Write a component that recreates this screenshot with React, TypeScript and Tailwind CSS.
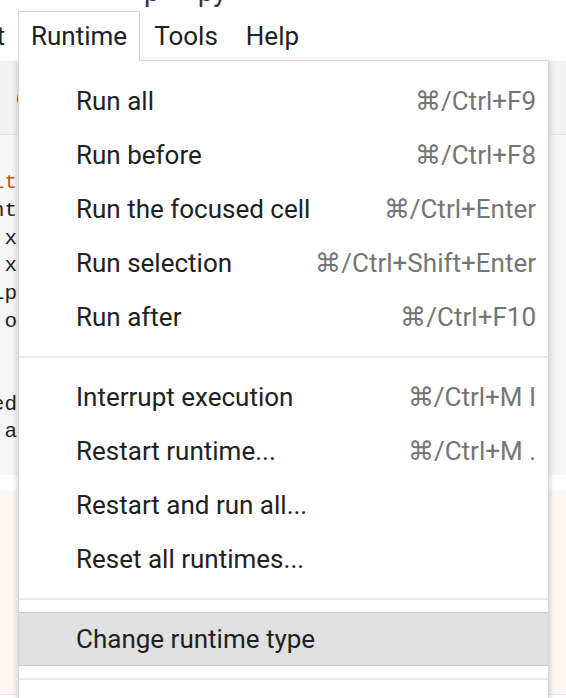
import React from "react";

type Item = { label: string; shortcut?: string; active?: boolean };

const group1: Item[] = [
  { label: "Run all", shortcut: "⌘/Ctrl+F9" },
  { label: "Run before", shortcut: "⌘/Ctrl+F8" },
  { label: "Run the focused cell", shortcut: "⌘/Ctrl+Enter" },
  { label: "Run selection", shortcut: "⌘/Ctrl+Shift+Enter" },
  { label: "Run after", shortcut: "⌘/Ctrl+F10" },
];
const group2: Item[] = [
  { label: "Interrupt execution", shortcut: "⌘/Ctrl+M I" },
  { label: "Restart runtime...", shortcut: "⌘/Ctrl+M ." },
  { label: "Restart and run all..." },
  { label: "Reset all runtimes..." },
];
const group3: Item[] = [{ label: "Change runtime type", active: true }];

const codeLines: { text: string; color?: string }[] = [
  { text: "it", color: "text-[#c0600f]" },
  { text: "nt" },
  { text: ".x" },
  { text: ".x" },
  { text: "ip" },
  { text: " o" },
  { text: "" },
  { text: "" },
  { text: "ed" },
  { text: ".a" },
];

function MenuItem({ item }: { item: Item }) {
  return (
    <div
      className={
        "flex h-[54px] items-center justify-between pl-[57px] pr-[12px] " +
        (item.active
          ? "border-y border-dotted border-[#bdbdbd] bg-[#e0e0e0]"
          : "")
      }
    >
      <span className="whitespace-nowrap text-[#212121]">{item.label}</span>
      {item.shortcut && (
        <span className="whitespace-nowrap text-[#757575]">{item.shortcut}</span>
      )}
    </div>
  );
}

function Sep() {
  return <div className="my-[12px] h-[2px] bg-[#e9e9e9]" />;
}

export default function App() {
  return (
    <div
      className="relative h-[698px] w-[566px] overflow-hidden bg-white"
      style={{ fontFamily: "Roboto, 'Liberation Sans', sans-serif" }}
    >
      {/* title remnants */}
      <div className="h-[11px] overflow-hidden">
        <div className="-mt-[22px] flex pl-[144px] text-[28px] leading-[28px] text-[#333]">
          <span>p</span>
          <span className="ml-[38px]">py</span>
        </div>
      </div>

      {/* menubar */}
      <div className="flex h-[50px] items-stretch text-[26px] text-[#212121]">
        <div className="flex w-[18px] items-center justify-end">
          <span className="whitespace-nowrap pr-[13px]">Edit</span>
        </div>
        <div className="relative z-20 flex items-center border border-b-0 border-[#d6d6d6] bg-white px-[12px]">
          Runtime
        </div>
        <div className="flex items-center px-[14px]">Tools</div>
        <div className="flex items-center px-[14px]">Help</div>
      </div>

      {/* toolbar */}
      <div className="relative h-[74px] border-b border-[#e3e3e3] bg-[#f2f2f2]">
        <div className="flex h-full items-center pl-[16px] pt-[4px] text-[22px] text-[#3c3c3c]">
          C
        </div>
      </div>

      {/* code cell */}
      <div className="h-[340px] bg-[#f6f6f6] pt-[34px]">
        {codeLines.map((l, i) => (
          <div key={i} className="flex h-[27.67px] w-[17px] items-center justify-end">
            <span
              className={"whitespace-pre text-[21px] leading-none " + (l.color ?? "text-[#222]")}
              style={{ fontFamily: "'Liberation Mono', monospace" }}
            >
              {l.text}
            </span>
          </div>
        ))}
      </div>

      <div className="h-[15px] bg-white" />

      <div className="h-[205px] border-b border-[#ece6e0] bg-[#fdf8f4]" />

      {/* dropdown menu */}
      <div className="absolute left-[18px] top-[60px] z-10 h-[680px] w-[531px] border border-[#d6d6d6] bg-white pt-[13px] text-[26px] shadow-[0_2px_7px_rgba(0,0,0,0.22)]">
        {group1.map((it) => (
          <MenuItem key={it.label} item={it} />
        ))}
        <Sep />
        {group2.map((it) => (
          <MenuItem key={it.label} item={it} />
        ))}
        <Sep />
        {group3.map((it) => (
          <MenuItem key={it.label} item={it} />
        ))}
        <Sep />
      </div>
    </div>
  );
}
